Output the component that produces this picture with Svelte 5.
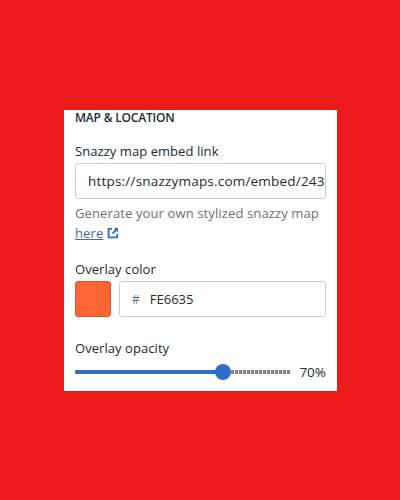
<script>
  const value = 70;
  const thumbPos = value * 0.98;
</script>

<div class="page">
  <section class="card">
    <h2>MAP &amp; LOCATION</h2>

    <div class="field link-field">
      <label for="embed">Snazzy map embed link</label>
      <div class="input"><span id="embed" class="url">https://snazzymaps.com/embed/243</span></div>
      <p class="help">Generate your own stylized snazzy map <a href="#top">here</a>
        <svg class="ext" viewBox="0 0 12 12" width="12" height="12" aria-hidden="true">
          <path d="M5 1.800H1.600v8.600h8.600V7" fill="none" stroke="#2c6ecb" stroke-width="1.800"/>
          <path d="M6.600 1h4.400v4.400L9.400 3.900 6 7.200 4.800 6l3.300-3.400z" fill="#2c6ecb"/>
        </svg>
      </p>
    </div>

    <div class="field color-field">
      <span class="label">Overlay color</span>
      <div class="color-row">
        <div class="swatch"></div>
        <div class="input hex"><span class="hash">#</span><span>FE6635</span></div>
      </div>
    </div>

    <div class="field opacity-field">
      <span class="label">Overlay opacity</span>
      <div class="slider-row">
        <div class="slider">
          <div class="fill" style="width: {thumbPos}%"></div>
          <div class="thumb" style="left: {thumbPos}%"></div>
        </div>
        <span class="val">{value}%</span>
      </div>
    </div>
  </section>
</div>

<style>
  :global(body) {
    margin: 0;
    background: #ed1a1b;
  }
  .page {
    box-sizing: border-box;
    height: 500px;
    padding: 110px 0 0 64px;
    font-family: "Open Sans", "Noto Sans", sans-serif;
    color: #212b36;
  }
  .card {
    box-sizing: border-box;
    width: 273px;
    height: 281px;
    background: #fff;
    padding: 0 11px;
    overflow: hidden;
  }
  h2 {
    margin: 0;
    font-size: 12px;
    line-height: 16px;
    font-weight: 600;
    letter-spacing: -0.2px;
  }
  .field { display: flex; flex-direction: column; }
  label, .label {
    font-size: 13px;
    line-height: 18px;
    letter-spacing: 0.06px;
  }
  .link-field { margin-top: 16px; }
  .link-field label { margin-bottom: 3px; }
  .input {
    box-sizing: border-box;
    height: 36px;
    border: 1px solid #c4cdd5;
    border-radius: 3px;
    display: flex;
    align-items: center;
    padding: 0 12px;
    font-size: 13px;
    white-space: nowrap;
    overflow: hidden;
    background: #fff;
  }
  .url { font-size: 13.500px; letter-spacing: 0.2px; }
  .help {
    margin: 4px 0 0;
    font-size: 13px;
    line-height: 20px;
    color: #637381;
    letter-spacing: 0.12px;
  }
  .help a { color: #3f6bb3; text-decoration: underline; }
  .ext { vertical-align: -1px; }
  .color-field { margin-top: 17px; }
  .color-field .label { margin-bottom: 3px; }
  .color-row { display: flex; gap: 8px; }
  .swatch {
    box-sizing: border-box;
    width: 36px;
    height: 36px;
    border-radius: 3px;
    background: #fe6635;
    border: 1px solid #d9542b;
  }
  .hex { flex: 1; }
  .hash { color: #637381; margin-right: 10px; font-size: 12px; }
  .opacity-field { margin-top: 22px; }
  .slider-row { display: flex; align-items: center; gap: 8px; margin-top: 7px; }
  .slider {
    position: relative;
    flex: 1;
    height: 16px;
    background: repeating-linear-gradient(90deg, #85858d 0 3px, #e2e2e5 3px 4px) center / 100% 4px no-repeat;
  }
  .fill {
    position: absolute;
    left: 0;
    top: 6px;
    height: 4px;
    background: #2f6cc8;
    border-radius: 2px;
  }
  .thumb {
    position: absolute;
    top: 0;
    width: 16px;
    height: 16px;
    margin-left: -8px;
    border-radius: 50%;
    background: #2f6cc8;
  }
  .val { font-size: 13.500px; line-height: 16px; }
</style>
